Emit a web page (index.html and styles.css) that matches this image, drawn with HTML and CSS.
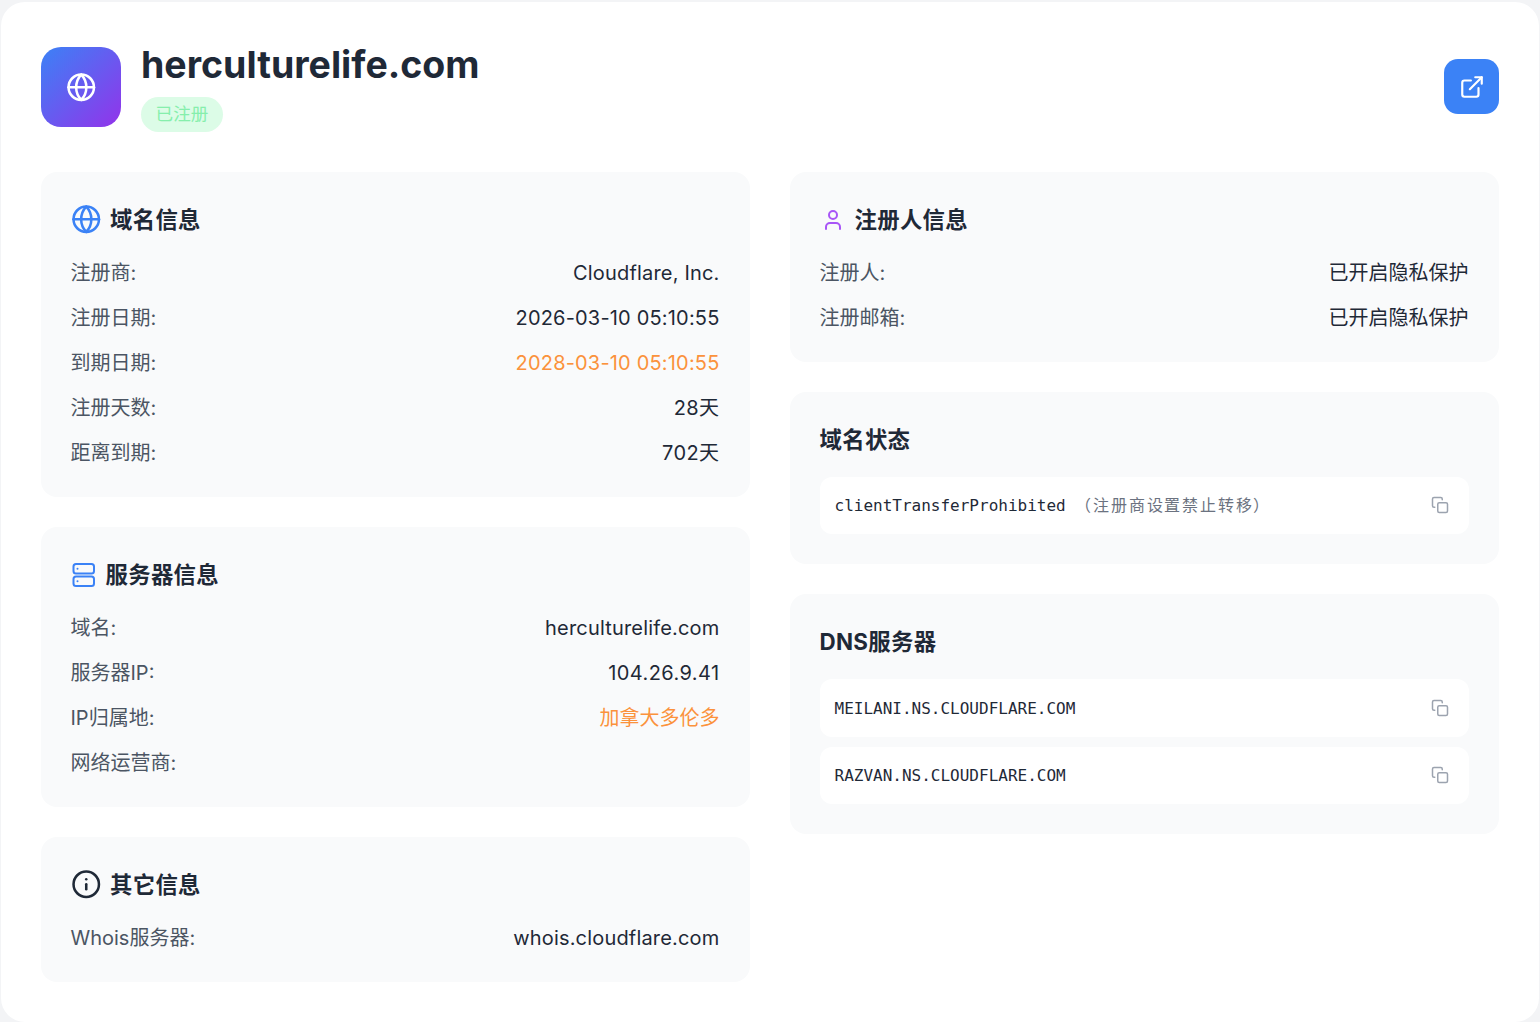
FILE: index.html
```html
<!DOCTYPE html>
<html lang="zh-CN">
<head>
<meta charset="utf-8">
<title>herculturelife.com</title>
<link rel="stylesheet" href="styles.css">
</head>
<body>
<main class="panel">
  <header class="top">
    <div class="logo">
      <svg class="logo-icon" viewBox="0 0 24 24"><circle cx="12" cy="12" r="10"/><path d="M12 2a14.5 14.5 0 0 0 0 20 14.5 14.5 0 0 0 0-20"/><path d="M2 12h20"/></svg>
    </div>
    <div class="top-text">
      <h1>herculturelife.com</h1>
      <span class="badge">已注册</span>
    </div>
    <a class="open" href="#">
      <svg viewBox="0 0 24 24"><path d="M18 13v6a2 2 0 0 1-2 2H5a2 2 0 0 1-2-2V8a2 2 0 0 1 2-2h6"/><path d="M15 3h6v6"/><path d="M10 14 21 3"/></svg>
    </a>
  </header>
  <div class="columns">
    <div class="column">
      <section class="card">
        <h2><svg class="ic ic-large blue" viewBox="0 0 24 24"><circle cx="12" cy="12" r="10"/><path d="M12 2a14.5 14.5 0 0 0 0 20 14.5 14.5 0 0 0 0-20"/><path d="M2 12h20"/></svg>域名信息</h2>
        <div class="rows">
          <div class="row"><span class="label">注册商:</span><span class="value wide">Cloudflare, Inc.</span></div>
          <div class="row"><span class="label">注册日期:</span><span class="value wide">2026-03-10 05:10:55</span></div>
          <div class="row"><span class="label">到期日期:</span><span class="value wide orange">2028-03-10 05:10:55</span></div>
          <div class="row"><span class="label">注册天数:</span><span class="value num">28天</span></div>
          <div class="row"><span class="label">距离到期:</span><span class="value num">702天</span></div>
        </div>
      </section>
      <section class="card">
        <h2><svg class="ic ic-server blue" viewBox="0 0 24 24"><rect x="1.5" y="1" width="20.5" height="9.5" rx="2.5"/><rect x="1.5" y="13.5" width="20.5" height="9.5" rx="2.5"/><path d="M5.5 5.75h.01"/><path d="M5.5 18.25h.01"/></svg>服务器信息</h2>
        <div class="rows">
          <div class="row"><span class="label">域名:</span><span class="value wide">herculturelife.com</span></div>
          <div class="row"><span class="label">服务器IP:</span><span class="value num">104.26.9.41</span></div>
          <div class="row"><span class="label">IP归属地:</span><span class="value orange">加拿大多伦多</span></div>
          <div class="row"><span class="label">网络运营商:</span><span class="value"></span></div>
        </div>
      </section>
      <section class="card">
        <h2><svg class="ic ic-large" viewBox="0 0 24 24"><circle cx="12" cy="12" r="10"/><path d="M12 16v-4"/><path d="M12 8h.01"/></svg>其它信息</h2>
        <div class="rows">
          <div class="row"><span class="label">Whois服务器:</span><span class="value wide">whois.cloudflare.com</span></div>
        </div>
      </section>
    </div>
    <div class="column">
      <section class="card">
        <h2><svg class="ic purple" viewBox="0 0 24 24"><path d="M19 21v-2a4 4 0 0 0-4-4H9a4 4 0 0 0-4 4v2"/><circle cx="12" cy="7" r="4"/></svg>注册人信息</h2>
        <div class="rows">
          <div class="row"><span class="label">注册人:</span><span class="value">已开启隐私保护</span></div>
          <div class="row"><span class="label">注册邮箱:</span><span class="value">已开启隐私保护</span></div>
        </div>
      </section>
      <section class="card">
        <h2>域名状态</h2>
        <div class="items">
          <div class="item"><span class="code code-status">clientTransferProhibited <span class="note">（注册商设置禁止转移）</span></span><svg class="copy" viewBox="0 0 24 24"><rect x="9" y="9" width="13" height="13" rx="2"/><path d="M5 15H4a2 2 0 0 1-2-2V4a2 2 0 0 1 2-2h9a2 2 0 0 1 2 2v1"/></svg></div>
        </div>
      </section>
      <section class="card">
        <h2>DNS服务器</h2>
        <div class="items">
          <div class="item"><span class="code">MEILANI.NS.CLOUDFLARE.COM</span><svg class="copy" viewBox="0 0 24 24"><rect x="9" y="9" width="13" height="13" rx="2"/><path d="M5 15H4a2 2 0 0 1-2-2V4a2 2 0 0 1 2-2h9a2 2 0 0 1 2 2v1"/></svg></div>
          <div class="item"><span class="code">RAZVAN.NS.CLOUDFLARE.COM</span><svg class="copy" viewBox="0 0 24 24"><rect x="9" y="9" width="13" height="13" rx="2"/><path d="M5 15H4a2 2 0 0 1-2-2V4a2 2 0 0 1 2-2h9a2 2 0 0 1 2 2v1"/></svg></div>
        </div>
      </section>
    </div>
  </div>
</main>
</body>
</html>
```

FILE: styles.css
```css
* { box-sizing: border-box; }
html, body { margin: 0; height: 100%; }
body {
  padding: 2px 1px 0;
  background: #f3f4f6;
  color: #1f2937;
  font-family: Inter, "Noto Sans CJK SC", sans-serif;
  overflow: hidden;
}
svg { fill: none; stroke: currentColor; stroke-width: 2; stroke-linecap: round; stroke-linejoin: round; flex: none; }
.panel {
  background: #fff;
  border-radius: 24px;
  padding: 40px;
  min-height: 1020px;
}
.top { display: flex; align-items: center; gap: 20px; margin-bottom: 40px; }
.logo {
  width: 80px; height: 80px; border-radius: 20px;
  background: linear-gradient(135deg, #3b82f6, #9333ea);
  display: flex; align-items: center; justify-content: center;
  color: #fff;
}
.logo-icon { width: 30.5px; height: 30.5px; }
.top-text { flex: 1; display: flex; flex-direction: column; align-items: flex-start; gap: 10px; }
h1 { margin: 0; font-size: 37.5px; line-height: 45px; font-weight: 700; }
.badge {
  height: 35px; padding: 0 14.6px; border-radius: 18px;
  background: #dcfce7; color: #86efac;
  font-size: 17.6px; line-height: 34px;
}
.open {
  width: 55px; height: 55px; border-radius: 14px; margin-top: -1px;
  background: #3b82f6; color: #fff;
  display: flex; align-items: center; justify-content: center;
}
.open svg { width: 26px; height: 26px; }
.columns { display: grid; grid-template-columns: 1fr 1fr; gap: 40px; align-items: start; }
.column { display: flex; flex-direction: column; gap: 30px; }
.card { background: #f9fafb; border-radius: 16px; padding: 30px 30.5px 30px 29.5px; }
h2 {
  margin: 0 0 20px; height: 35px;
  display: flex; align-items: center; gap: 10px;
  font-size: 22.4px; line-height: 36px; font-weight: 700; letter-spacing: 0.3px;
}
.ic { width: 24px; height: 24px; margin-left: 1px; }
.ic-large { width: 30.5px; height: 30.5px; margin: 0 -1px 0 0; }
.ic-server { margin: 0 0 0 1px; }
.blue { color: #3b82f6; }
.purple { color: #a855f7; }
.rows { display: flex; flex-direction: column; gap: 15px; }
.row { display: flex; justify-content: space-between; height: 30px; font-size: 20px; line-height: 32px; }
.label { color: #4b5563; }
.value { color: #1f2937; }
.wide { letter-spacing: 0.18px; }
.num { letter-spacing: 0.42px; }
.orange { color: #fb923c; }
.items { display: flex; flex-direction: column; gap: 10px; }
.item {
  height: 57.4px; padding: 0 20px 0 15px;
  background: #fff; border-radius: 12px;
  display: flex; align-items: center; justify-content: space-between;
}
.code { font-family: monospace; font-size: 16px; line-height: 24px; color: #1f2937; margin-top: 1px; }
.code-status { margin-top: 0; }
.note { color: #6b7280; letter-spacing: 1.8px; }
.copy { width: 18px; height: 18px; color: #9ca3af; margin-top: -1px; }
```
